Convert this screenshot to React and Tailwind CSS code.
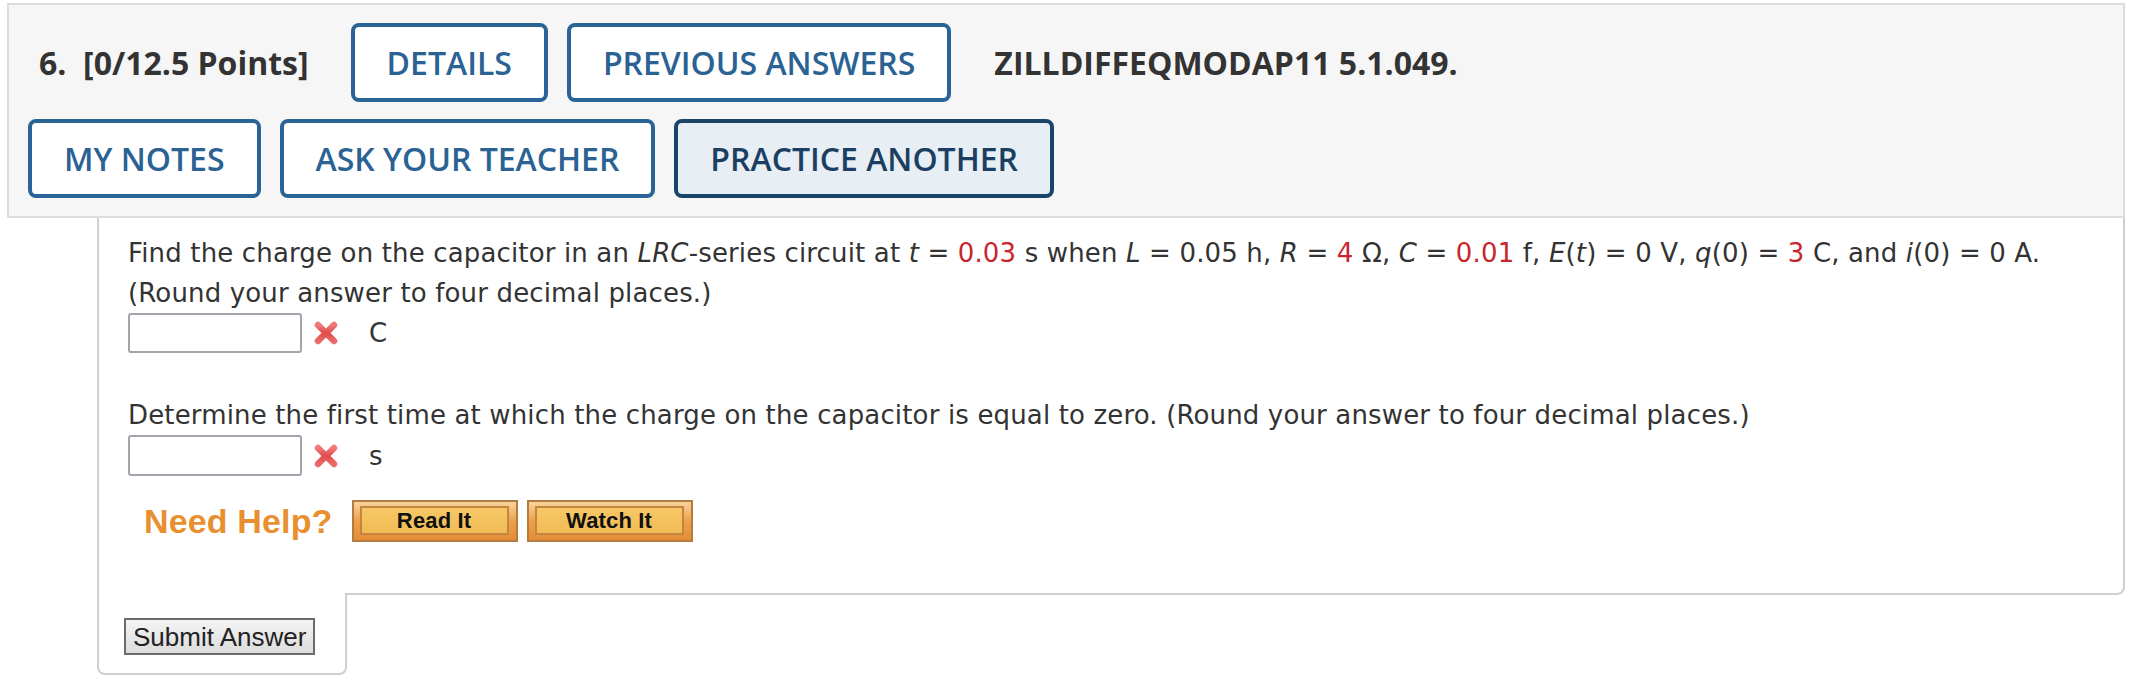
function XIcon() {
  return (
    <svg width="26" height="26" viewBox="0 0 26 26" className="shrink-0">
      <defs>
        <linearGradient id="xg" x1="0" y1="0" x2="0" y2="1">
          <stop offset="0" stopColor="#f07a7a" />
          <stop offset="0.5" stopColor="#e24a4a" />
          <stop offset="1" stopColor="#ea6a6a" />
        </linearGradient>
      </defs>
      <path d="M5 5 L21 21 M21 5 L5 21" stroke="url(#xg)" strokeWidth="6.5" strokeLinecap="round" fill="none" />
    </svg>
  );
}

function NavButton({ children, active }) {
  return (
    <div
      className={
        active
          ? "h-[79px] px-[32px] border-4 border-[#1a4468] rounded-[8px] bg-[#e8eff4] text-[32px] font-semibold text-[#1b3f62] flex items-center leading-none"
          : "h-[79px] px-[32px] border-4 border-[#2a6496] rounded-[8px] bg-white text-[32px] font-semibold text-[#2a6294] flex items-center leading-none"
      }
    >
      {children}
    </div>
  );
}

function HelpButton({ children }) {
  return (
    <div className="h-[42px] border-2 border-[#b27d3e] bg-linear-to-b from-[#f7d39c] via-[#eda14a] to-[#e38c35] pt-[4px] pb-[5px] pl-[6px] pr-[7px] flex">
      <div className="flex-1 border-2 border-[#c48542] bg-linear-to-b from-[#f6c865] to-[#f1bb55] flex items-center justify-center font-['Liberation_Sans',Arial,sans-serif] font-bold text-[22px] text-[#111] leading-none">
        {children}
      </div>
    </div>
  );
}

function Red({ children }) {
  return <span className="text-[#c8262c]">{children}</span>;
}

export default function App() {
  return (
    <div className="w-[2134px] h-[688px] bg-white pt-[3px] pl-[7px] pr-[9px] overflow-hidden">
      <div className="border-2 border-[#dcdcdc] bg-[#f6f6f6] pt-[18px] pb-[18px] pl-[19px] font-['Open_Sans',sans-serif] flex flex-col gap-[17px]">
        <div className="flex items-center">
          <span className="ml-[11px] mr-[42px] text-[32px] font-bold text-[#333] whitespace-pre">6.  [0/12.5 Points]</span>
          <div className="flex gap-[19px]">
            <NavButton>DETAILS</NavButton>
            <NavButton>PREVIOUS ANSWERS</NavButton>
          </div>
          <span className="ml-[43px] text-[32px] font-bold text-[#333]">ZILLDIFFEQMODAP11 5.1.049.</span>
        </div>
        <div className="flex gap-[19px]">
          <NavButton>MY NOTES</NavButton>
          <NavButton>ASK YOUR TEACHER</NavButton>
          <NavButton active>PRACTICE ANOTHER</NavButton>
        </div>
      </div>

      <div className="ml-[90px] border-x-2 border-b-2 border-[#cfcfcf] rounded-br-[8px] pl-[29px] pt-[15px] pb-[51px] font-['DejaVu_Sans',Verdana,sans-serif] text-[26px] tracking-[0.15px] leading-[40px] text-[#333]">
        <p>
          Find the charge on the capacitor in an <i>LRC</i>-series circuit at <i>t</i> = <Red>0.03</Red> s when{" "}
          <i>L</i> = 0.05 h, <i>R</i> = <Red>4</Red> Ω, <i>C</i> = <Red>0.01</Red> f, <i>E</i>(<i>t</i>) = 0 V,{" "}
          <i>q</i>(0) = <Red>3</Red> C, and <i>i</i>(0) = 0 A.
          <br />
          (Round your answer to four decimal places.)
        </p>
        <div className="flex items-center h-[40px]">
          <div className="w-[174px] h-[40px] border-2 border-[#a3a3ab] rounded-[3px] bg-white"></div>
          <div className="ml-[11px]">
            <XIcon />
          </div>
          <span className="ml-[30px]">C</span>
        </div>

        <p className="mt-[42px]">
          Determine the first time at which the charge on the capacitor is equal to zero. (Round your answer to four decimal places.)
        </p>
        <div className="flex items-center h-[41px]">
          <div className="w-[174px] h-[41px] border-2 border-[#a3a3ab] rounded-[3px] bg-white"></div>
          <div className="ml-[11px]">
            <XIcon />
          </div>
          <span className="ml-[30px]">s</span>
        </div>

        <div className="mt-[24px] flex items-center">
          <span className="ml-[16px] mr-[19px] font-['Liberation_Sans',Arial,sans-serif] font-bold text-[34px] text-[#e8902f] leading-none">
            Need Help?
          </span>
          <div className="flex gap-[9px]">
            <div className="w-[166px]">
              <HelpButton>Read It</HelpButton>
            </div>
            <div className="w-[166px]">
              <HelpButton>Watch It</HelpButton>
            </div>
          </div>
        </div>
      </div>

      <div className="relative -mt-[2px] ml-[90px] w-[250px] h-[82px] bg-white border-x-2 border-b-2 border-[#cfcfcf] rounded-b-[8px] pt-[25px] pl-[25px]">
        <div className="inline-flex items-center h-[37px] px-[7px] border-2 border-[#6b6b6b] bg-linear-to-b from-[#f4f4f4] to-[#dcdcdc] font-['Liberation_Sans',Arial,sans-serif] text-[26px] text-[#222] leading-none">
          Submit Answer
        </div>
      </div>
    </div>
  );
}
